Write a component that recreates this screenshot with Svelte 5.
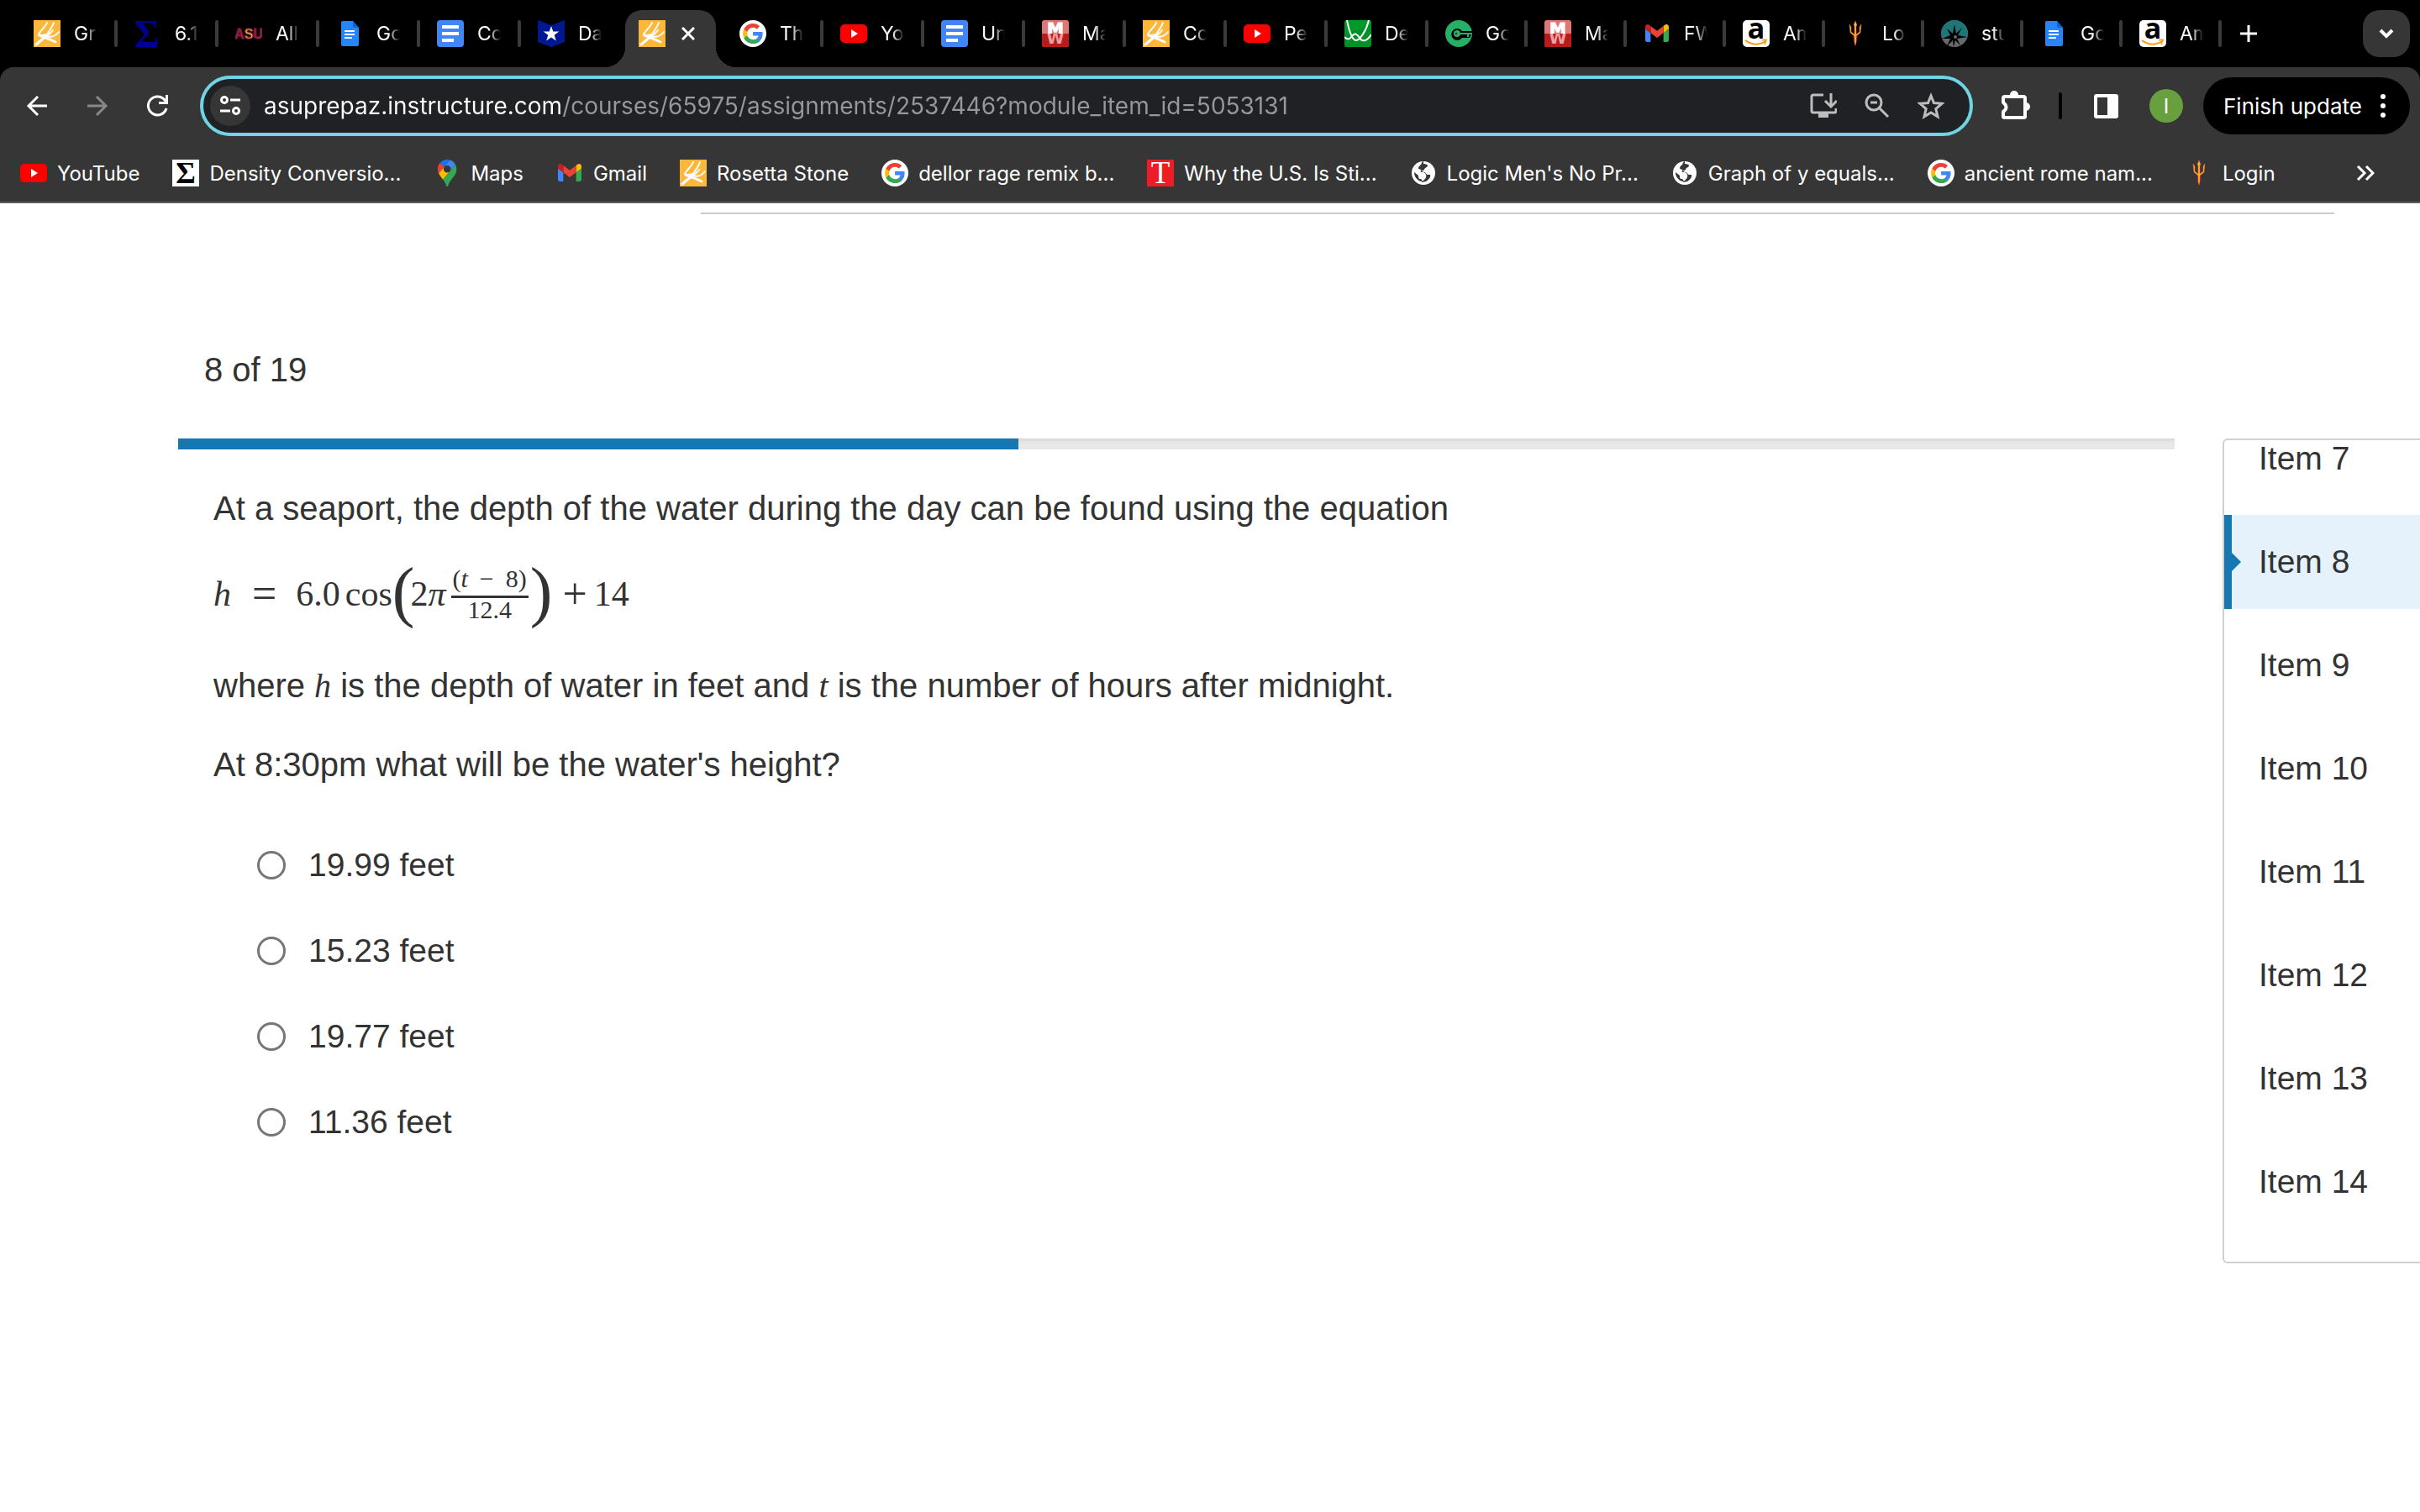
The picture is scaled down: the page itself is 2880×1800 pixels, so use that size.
<script lang="ts">
  type Link = { icon: string; label: string };

  const tabs: Link[] = [
    { icon: 'rosetta', label: 'Gr' },
    { icon: 'sigma', label: '6.1' },
    { icon: 'asu', label: 'All' },
    { icon: 'file', label: 'Go' },
    { icon: 'doc', label: 'Co' },
    { icon: 'badge', label: 'Da' },
    { icon: 'rosetta', label: '' },
    { icon: 'google', label: 'Th' },
    { icon: 'youtube', label: 'Yo' },
    { icon: 'doc', label: 'Un' },
    { icon: 'mirror', label: 'Ma' },
    { icon: 'rosetta', label: 'Co' },
    { icon: 'youtube', label: 'Pe' },
    { icon: 'desmos', label: 'De' },
    { icon: 'key', label: 'Go' },
    { icon: 'mirror', label: 'Ma' },
    { icon: 'gmail', label: 'FW' },
    { icon: 'amazon', label: 'Am' },
    { icon: 'trident', label: 'Lo' },
    { icon: 'compass', label: 'stu' },
    { icon: 'file', label: 'Go' },
    { icon: 'amazon', label: 'Am' }
  ];
  const activeTab = 6;
  const fullTabs = 14;

  const bookmarks: Link[] = [
    { icon: 'youtube', label: 'YouTube' },
    { icon: 'sigmaBox', label: 'Density Conversio...' },
    { icon: 'maps', label: 'Maps' },
    { icon: 'gmail', label: 'Gmail' },
    { icon: 'rosetta', label: 'Rosetta Stone' },
    { icon: 'google', label: 'dellor rage remix b...' },
    { icon: 'times', label: 'Why the U.S. Is Sti...' },
    { icon: 'globe', label: "Logic Men's No Pr..." },
    { icon: 'globe', label: 'Graph of y equals...' },
    { icon: 'google', label: 'ancient rome nam...' },
    { icon: 'trident', label: 'Login' }
  ];

  const options = ['19.99 feet', '15.23 feet', '19.77 feet', '11.36 feet'];
  const items = [7, 8, 9, 10, 11, 12, 13, 14];
  const total = 19;

  let url = $state('asuprepaz.instructure.com/courses/65975/assignments/2537446?module_item_id=5053131');
  let current = $state(8);
  let answer = $state('');

  const progress = $derived((current / total) * 100);
</script>

{#snippet icon(name: string)}
  <svg class="icon" viewBox="0 0 32 32" aria-hidden="true">
    {#if name === 'rosetta'}
      <rect width="32" height="32" fill="#fdb73b" />
      <g fill="none" stroke="#fff" stroke-linecap="round">
        <path d="M16 3C14 8 7 14 6 17c0 2 6 1 9 0" stroke-width="2" />
        <path d="M24 3c-2 6-6 10-8 14" stroke-width="2" />
        <path d="M30 14c-4 5-8 7-14 5" stroke-width="2" />
        <path d="M23 12c-3 4-7 7-11 8" stroke-width="2" />
        <path d="M3 29 16 18M7 18l10 4 9 4" stroke-width="3" />
      </g>
    {:else if name === 'sigma'}
      <text x="15" y="32" font-size="46" font-weight="700" text-anchor="middle" fill="#00008f" font-family="Liberation Serif, serif">Σ</text>
    {:else if name === 'sigmaBox'}
      <rect width="32" height="32" fill="#fff" />
      <text x="16" y="28" font-size="36" font-weight="700" text-anchor="middle" fill="#000" font-family="Liberation Serif, serif">Σ</text>
    {:else if name === 'asu'}
      <text x="16" y="22" font-size="16" font-weight="700" text-anchor="middle" fill="#8c1d40" stroke="#8c1d40" font-family="Liberation Sans, sans-serif">A<tspan fill="#ffc627">S</tspan>U</text>
    {:else if name === 'file'}
      <path d="M8 1h12l7 8v20a2 2 0 0 1-2 2H8a2 2 0 0 1-2-2V3a2 2 0 0 1 2-2z" fill="#2684fc" />
      <path d="M20 1l7 8h-5a2 2 0 0 1-2-2z" fill="#0066da" />
      <path d="M10 13h12M10 17h12M10 21h9" stroke="#fff" stroke-width="2" />
    {:else if name === 'doc'}
      <rect width="32" height="32" rx="4" fill="#4285f4" />
      <path d="M6 8h20M6 16h20M6 24h14" stroke="#fff" stroke-width="4" />
    {:else if name === 'badge'}
      <path d="M0 0l16 6L32 0v26l-16 6-16-6z" fill="#00188f" />
      <path d="M16 7l2.300 6.600h7l-5.600 4.200 2.100 6.800-5.800-4.100-5.800 4.100 2.100-6.800-5.600-4.200h7z" fill="#fff" />
    {:else if name === 'google'}
      <circle cx="16" cy="16" r="16" fill="#fff" />
      <g transform="translate(3 3) scale(1.090)">
        <path fill="#4285f4" d="M22.560 12.250c0-.780-.070-1.530-.200-2.250H12v4.260h5.920c-.260 1.370-1.040 2.530-2.210 3.310v2.770h3.570c2.080-1.920 3.280-4.740 3.280-8.090z" />
        <path fill="#34a853" d="M12 23c2.970 0 5.460-.98 7.280-2.660l-3.570-2.770c-.98.66-2.230 1.060-3.710 1.060-2.860 0-5.290-1.930-6.160-4.530H2.180v2.840C3.990 20.530 7.700 23 12 23z" />
        <path fill="#fbbc05" d="M5.840 14.090c-.22-.66-.35-1.360-.35-2.090s.13-1.430.35-2.090V7.070H2.180C1.430 8.550 1 10.220 1 12s.43 3.450 1.180 4.930l2.850-2.220.81-.62z" />
        <path fill="#ea4335" d="M12 5.380c1.620 0 3.060.56 4.210 1.640l3.150-3.150C17.450 2.090 14.970 1 12 1 7.700 1 3.990 3.470 2.180 7.070l3.660 2.840c.87-2.600 3.300-4.530 6.160-4.530z" />
      </g>
    {:else if name === 'youtube'}
      <rect y="5" width="32" height="22" rx="5" fill="#f00" />
      <path d="M13 11l8 5-8 5z" fill="#fff" />
    {:else if name === 'mirror'}
      <rect width="32" height="32" rx="3" fill="#dd7878" />
      <text x="16" y="17" font-size="20" font-weight="700" text-anchor="middle" fill="#fff" stroke="#fff" font-family="DejaVu Sans, sans-serif">M</text>
      <svg y="16" width="32" height="16">
        <rect y="-16" width="32" height="32" rx="3" fill="#b71c1c" />
        <text x="16" y="12" font-size="19" font-weight="700" text-anchor="middle" fill="#eba0a0" font-family="DejaVu Sans, sans-serif">W</text>
      </svg>
    {:else if name === 'desmos'}
      <rect width="32" height="32" rx="3" fill="#009a2b" />
      <path d="M0 32V18L32 4v25a3 3 0 0 1-3 3z" fill="#008526" opacity="0.500" />
      <path d="M3 0c3 15 7 24 11 24S26 13 29 0M0 20c4 4 6 3 9-1s6-3 9 2 8 5 14-4" fill="none" stroke="#fff" stroke-width="2" />
    {:else if name === 'key'}
      <circle cx="16" cy="16" r="16" fill="#27ae67" />
      <path d="M32 13H20a7 7 0 1 0 0 8h9l2-4h1z" fill="#000" />
      <circle cx="14" cy="16" r="4" fill="#27ae67" />
      <circle cx="13" cy="16" r="1" fill="#000" />
      <path d="M18 16h14M27 17v3" stroke="#27ae67" stroke-width="2" />
    {:else if name === 'gmail'}
      <g transform="translate(2 5) scale(0.318) translate(-52 -42)">
        <path fill="#4285f4" d="M58 108h14V74L52 59v43c0 3.320 2.690 6 6 6" />
        <path fill="#34a853" d="M120 108h14c3.320 0 6-2.690 6-6V59l-20 15" />
        <path fill="#fbbc04" d="M120 48v26l20-15v-8c0-7.420-8.470-11.650-14.400-7.200" />
        <path fill="#ea4335" d="M72 74V48l24 18 24-18v26L96 92" />
        <path fill="#c5221f" d="M52 51v8l20 15V48l-5.600-4.200c-5.940-4.450-14.400-.22-14.400 7.200" />
      </g>
    {:else if name === 'amazon'}
      <rect width="32" height="32" rx="5" fill="#fff" />
      <text x="16" y="22" font-size="34" font-weight="700" text-anchor="middle" fill="#000" font-family="Open Sans, sans-serif">a</text>
      <path d="M3 24c8 6 17 6 24 1" fill="none" stroke="#f90" stroke-width="2" />
      <path d="M23 24c3-1 6-1 5 0s-1 3-2 5" fill="none" stroke="#f90" stroke-width="1.500" />
    {:else if name === 'trident'}
      <path d="M16 31l-3-12h6z" fill="#8c1d40" />
      <path d="M16 1l2 5-1 1v10l4-3V8l2-3-1 10-5 4v7l-1 4-1-4v-7l-5-4L9 5l2 3v6l4 3V7l-1-1z" fill="#ffb32c" stroke="#e8682c" stroke-width="0.500" />
    {:else if name === 'compass'}
      <circle cx="16" cy="16" r="16" fill="#68696d" />
      <path d="M0 16a16 16 0 0 1 32 0l-3 6-13-4-14 4z" fill="#1f7678" />
      <path d="M16 5l2 11 7-7-5 9 11 2-12 2 4 8-6-6-2 8-1-8-7 7 4-9-10 0 10-4-4-8 7 6z" fill="#000" />
      <circle cx="17" cy="20" r="2" fill="#68696d" />
    {:else if name === 'maps'}
      <g transform="translate(5 0) scale(0.242)">
        <path fill="#1a73e8" d="M60.200 2.200C55.800.8 51 0 46.100 0 32 0 19.300 6.400 10.800 16.500l21.800 18.300L60.200 2.200z" />
        <path fill="#ea4335" d="M10.800 16.500C4.100 24.500 0 34.900 0 46.100c0 8.700 1.700 15.700 4.600 22l28-33.300-21.800-18.300z" />
        <path fill="#4285f4" d="M46.200 28.500c9.800 0 17.700 7.900 17.700 17.700 0 4.300-1.600 8.300-4.200 11.400 0 0 13.900-16.600 27.500-32.700-5.600-10.800-15.300-19-27-22.700L32.600 34.800c3.300-3.800 8.100-6.300 13.600-6.300" />
        <path fill="#fbbc04" d="M46.200 63.800c-9.800 0-17.700-7.900-17.700-17.700 0-4.300 1.500-8.300 4.100-11.300l-28 33.300c4.800 10.600 12.800 19.200 21 29.900l34.100-40.500c-3.300 3.900-8.100 6.300-13.500 6.300" />
        <path fill="#34a853" d="M59.100 109.200c15.400-24.100 33.300-35 33.300-63 0-7.700-1.900-14.900-5.200-21.300L25.600 98c2.600 3.400 5.300 7.300 7.900 11.300 9.400 14.500 6.800 23.100 12.800 23.100s3.400-8.700 12.800-23.200" />
      </g>
    {:else if name === 'times'}
      <rect width="32" height="32" fill="#ee1c25" />
      <text x="16" y="28" font-size="37" text-anchor="middle" fill="#fff" font-family="Liberation Serif, serif">T</text>
    {:else if name === 'globe'}
      <circle cx="16" cy="16" r="14" fill="#fff" />
      <path d="M16 5c3 0 5 1 5 2 0 2-2 2-3 3s-1 3-3 3h-2c-1 1 0 2 1 2h3c2 0 2 3 4 3h3c1 3-2 6-5 8l-5 1c1-2 0-4-2-4s-2-2-2-4l-5-4c0 5 3 9 8 11l3-1c2-2 4-4 3-7s-4-3-5-5-4-1-4-3 2-3 3-4 1-4 3-4z" fill="#363636" />
    {/if}
  </svg>
{/snippet}

<header class="browser">
  <div class="tab-strip">
    {#each tabs as tab, i}
      {#if i === activeTab}
        <div class="tab active">
          {@render icon(tab.icon)}
          <button class="close" type="button" aria-label="Close tab">
            <svg viewBox="0 0 16 16"><path d="M1 1l14 14M15 1L1 15" fill="none" stroke="#fff" stroke-width="3" /></svg>
          </button>
        </div>
      {:else}
        <button class="tab" class:narrow={i >= fullTabs} class:no-rule={i === activeTab - 1} type="button">
          {@render icon(tab.icon)}
          <span class="tab-label">{tab.label}</span>
        </button>
      {/if}
    {/each}
    <button class="new-tab" type="button" aria-label="New tab">
      <svg viewBox="0 0 20 20"><path d="M10 0v20M0 10h20" stroke="#fff" stroke-width="3" /></svg>
    </button>
    <button class="tab-search" type="button" aria-label="Search tabs">
      <svg viewBox="0 0 18 12"><path d="M2 2l7 7 7-7" fill="none" stroke="#fff" stroke-width="4" /></svg>
    </button>
  </div>

  <div class="chrome">
    <div class="toolbar">
      <div class="nav-buttons">
        <button type="button" aria-label="Back">
          <svg viewBox="0 0 32 32"><path d="M28 16H6M17 5L6 16l11 11" fill="none" stroke="#fff" stroke-width="3" /></svg>
        </button>
        <button type="button" aria-label="Forward">
          <svg viewBox="0 0 32 32"><path d="M4 16h22M15 5l11 11-11 11" fill="none" stroke="#888" stroke-width="3" /></svg>
        </button>
        <button type="button" aria-label="Reload">
          <svg viewBox="0 0 32 32"><path d="M26 19a11 11 0 1 1-2-10l3 3" fill="none" stroke="#fff" stroke-width="3" /><path d="M28 3v11H17v-3h8V3z" fill="#fff" /></svg>
        </button>
      </div>

      <div class="omnibox">
        <button class="site-info" type="button" aria-label="View site information">
          <svg viewBox="0 0 24 24"><g fill="none" stroke="#fff" stroke-width="3"><circle cx="5" cy="5" r="3.500" /><circle cx="19" cy="18" r="3.500" /><path d="M12 5h12M0 18h12" /></g></svg>
        </button>
        <input aria-label="Address" type="text" spellcheck="false" bind:value={url} />
        <button type="button" aria-label="Install app">
          <svg viewBox="0 0 32 32"><path d="M16 3H4q-2 0-2 2v17q0 2 2 2h25q2 0 2-2v-3" fill="none" stroke="#bdbdbd" stroke-width="3" /><path d="M25 1v15M18 10l7 7 7-7" fill="none" stroke="#bdbdbd" stroke-width="3" /><path d="M10 25h12v5H10z" fill="#bdbdbd" /></svg>
        </button>
        <button type="button" aria-label="Zoom">
          <svg viewBox="0 0 32 32"><g fill="none" stroke="#bdbdbd" stroke-width="3"><circle cx="12" cy="12" r="9" /><path d="M8 12h8M18 18l11 11" /></g></svg>
        </button>
        <button type="button" aria-label="Bookmark this tab">
          <svg viewBox="0 0 32 32"><path d="M16 4l3.500 8.500 9.500.8-7.200 6.200 2.200 9.300-8-4.900-8 4.900 2.200-9.300L3 13.300l9.500-.8z" fill="none" stroke="#bdbdbd" stroke-width="3" /></svg>
        </button>
      </div>

      <div class="tools">
        <button type="button" aria-label="Extensions">
          <svg viewBox="0 0 40 40"><path d="M8 9h22q2 0 2 2v22q0 1-2 1H8q-2 0-2-1v-6q7-5 0-11v-5q0-2 2-2z" fill="none" stroke="#fff" stroke-width="4" stroke-linejoin="round" /><path d="M15 7a4 4 0 0 1 8 0zM33 17a4 4 0 0 1 0 8z" fill="#fff" stroke="#fff" stroke-width="2" /></svg>
        </button>
        <span class="divider"></span>
        <button type="button" aria-label="Side panel">
          <svg viewBox="0 0 40 40"><rect x="8" y="8" width="25" height="25" rx="1" fill="none" stroke="#fff" stroke-width="4" /><path d="M22 8h11v25H22z" fill="#fff" /></svg>
        </button>
        <button class="avatar" type="button">I</button>
      </div>
      <button class="update" type="button">
        Finish update
        <svg viewBox="0 0 8 30"><g fill="#fff"><circle cx="4" cy="4" r="3" /><circle cx="4" cy="15" r="3" /><circle cx="4" cy="26" r="3" /></g></svg>
      </button>
    </div>

    <nav class="bookmarks" aria-label="Bookmarks">
      {#each bookmarks as bookmark}
        <a href="#top">{@render icon(bookmark.icon)}<span>{bookmark.label}</span></a>
      {/each}
      <button type="button" aria-label="More bookmarks">
        <svg viewBox="0 0 22 18"><path d="M2 1l8 8-8 8M12 1l8 8-8 8" fill="none" stroke="#fff" stroke-width="3" /></svg>
      </button>
    </nav>
  </div>
</header>

<main id="top">
  <hr />
  <h1>{current} of {total}</h1>

  <div class="columns">
    <section class="question">
      <div class="progress" role="progressbar" aria-label="Progress" aria-valuenow={current} aria-valuemin="0" aria-valuemax={total}>
        <div class="progress-fill" style="width: {progress}%"></div>
      </div>

      <div class="prompt">
        <p>At a seaport, the depth of the water during the day can be found using the equation</p>
        <div class="equation">
          <i class="sym">h</i>
          <span class="sym op equals">=</span>
          <span class="sym">6.0</span>
          <span class="sym cos">cos</span>
          <span class="paren open">(</span>
          <span class="sym">2<i>π</i></span>
          <span class="fraction">
            <span class="numerator">(<i>t</i><span class="minus">−</span>8)</span>
            <span class="denominator">12.4</span>
          </span>
          <span class="paren">)</span>
          <span class="sym op plus">+</span>
          <span class="sym">14</span>
        </div>
        <p>where <i>h</i> is the depth of water in feet and <i>t</i> is the number of hours after midnight.</p>
        <p>At 8:30pm what will be the water's height?</p>
      </div>

      <div class="options" role="radiogroup" aria-label="Answers">
        {#each options as option}
          <label>
            <input type="radio" name="answer" value={option} bind:group={answer} />
            {option}
          </label>
        {/each}
      </div>
    </section>

    <nav class="items" aria-label="Items">
      {#each items as item}
        <button class:selected={item === current} type="button" onclick={() => (current = item)}>Item {item}</button>
      {/each}
    </nav>
  </div>
</main>

<style>
  :global(body) {
    background: #fff;
    overflow-x: hidden;
  }

  button {
    padding: 0;
    border: 0;
    background: none;
    color: inherit;
    font: inherit;
  }

  svg {
    display: block;
    flex: none;
  }

  .icon {
    width: 32px;
    height: 32px;
  }

  .browser {
    background: #000;
    color: #fff;
    font-family: Inter, 'Liberation Sans', sans-serif;
    font-size: 24px;
  }

  .tab-strip {
    display: flex;
    height: 80px;
    padding: 0 12px 0 20px;
    font-size: 23px;
  }

  .tab {
    position: relative;
    display: flex;
    flex: none;
    gap: 16px;
    align-items: center;
    box-sizing: border-box;
    width: 120px;
    padding-left: 20px;
  }

  .tab.narrow {
    width: 118px;
  }

  .tab:not(.active):not(.no-rule)::after {
    content: '';
    position: absolute;
    right: 0;
    width: 4px;
    height: 32px;
    border-radius: 2px;
    background: #3a3a3a;
  }

  .tab-label {
    width: 28px;
    overflow: hidden;
    text-align: left;
    white-space: nowrap;
    mask-image: linear-gradient(90deg, #000 50%, transparent);
  }

  .tab.active {
    gap: 19px;
    width: 108px;
    margin: 12px 8px 0 4px;
    padding: 0 0 12px 16px;
    border-radius: 20px 20px 0 0;
    background: #363636;
  }

  .tab.active::before,
  .tab.active::after {
    content: '';
    position: absolute;
    bottom: 0;
    width: 24px;
    height: 24px;
  }

  .tab.active::before {
    right: 100%;
    background: radial-gradient(circle at 0 0, transparent 24px, #363636 24px);
  }

  .tab.active::after {
    left: 100%;
    background: radial-gradient(circle at 100% 0, transparent 24px, #363636 24px);
  }

  .close svg {
    width: 16px;
    height: 16px;
  }

  .new-tab {
    margin-left: 22px;
  }

  .new-tab svg {
    width: 20px;
    height: 20px;
  }

  .tab-search {
    display: grid;
    place-items: center;
    width: 56px;
    height: 56px;
    margin: 12px 0 0 auto;
    border-radius: 20px;
    background: #363636;
  }

  .tab-search svg {
    width: 18px;
    height: 12px;
  }

  .chrome {
    border-bottom: 2px solid #5c5c5c;
    border-radius: 16px 16px 0 0;
    background: #363636;
  }

  .toolbar {
    display: flex;
    align-items: center;
    height: 92px;
    padding: 0 12px 0 20px;
  }

  .nav-buttons {
    display: flex;
    gap: 24px;
    margin-right: 26px;
  }

  .nav-buttons button {
    padding: 8px;
  }

  .nav-buttons svg,
  .omnibox svg {
    width: 32px;
    height: 32px;
  }

  .omnibox {
    display: flex;
    flex: 1;
    gap: 32px;
    align-items: center;
    box-sizing: border-box;
    height: 72px;
    padding: 0 30px 0 8px;
    border: 4px solid #70d4e2;
    border-radius: 36px;
    background: #202124;
  }

  .omnibox .site-info {
    display: grid;
    place-items: center;
    width: 48px;
    height: 48px;
    margin-right: -16px;
    border-radius: 50%;
    background: #363636;
  }

  .omnibox .site-info svg {
    width: 24px;
    height: 24px;
  }

  .omnibox input {
    flex: 1;
    min-width: 0;
    padding: 0;
    border: 0;
    outline: 0;
    background: linear-gradient(90deg, #fff 354px, #96989c 354px);
    background-clip: text;
    color: transparent;
    font: 28px Inter, 'Liberation Sans', sans-serif;
  }

  .tools {
    display: flex;
    gap: 32px;
    align-items: center;
    margin: 0 24px 0 30px;
  }

  .tools svg {
    width: 40px;
    height: 40px;
  }

  .divider {
    width: 4px;
    height: 32px;
    border-radius: 2px;
    background: #000;
  }

  .avatar {
    width: 40px;
    height: 40px;
    border-radius: 50%;
    background: #689f3f;
  }

  .update {
    display: flex;
    align-items: center;
    justify-content: space-between;
    width: 246px;
    height: 68px;
    padding: 0 28px 0 24px;
    border-radius: 34px;
    background: #000;
    font-size: 26px;
    white-space: nowrap;
  }

  .update svg {
    width: 8px;
    height: 30px;
  }

  .bookmarks {
    display: flex;
    gap: 39px;
    align-items: center;
    height: 68px;
    padding: 0 54px 0 24px;
  }

  .bookmarks a {
    display: flex;
    gap: 12px;
    align-items: center;
    color: #fff;
    text-decoration: none;
    white-space: nowrap;
  }

  .bookmarks button {
    margin-left: auto;
  }

  .bookmarks button svg {
    width: 22px;
    height: 18px;
  }

  main {
    color: #333;
    font-family: 'Liberation Sans', Arial, sans-serif;
    font-size: 39px;
    line-height: 54px;
  }

  hr {
    height: 2px;
    margin: 11px 102px 0 834px;
    border: 0;
    background: #ccc;
  }

  h1 {
    margin: 158px 0 55px 243px;
    font-size: 40px;
    font-weight: 400;
  }

  .columns {
    display: flex;
    gap: 57px;
    align-items: flex-start;
    padding-left: 212px;
  }

  .question {
    flex: 1;
  }

  .progress {
    height: 13px;
    background: linear-gradient(#d8d8d8, #e8e8e8 6px);
  }

  .progress-fill {
    height: 100%;
    background: #1777b0;
  }

  .prompt {
    display: grid;
    gap: 39px;
    padding: 43px 42px 0;
    font-size: 40px;
  }

  .prompt p {
    margin: 0;
  }

  .prompt i,
  .equation {
    font-family: 'Liberation Serif', 'Times New Roman', serif;
  }

  .equation {
    display: flex;
    align-items: center;
    height: 79px;
    font-size: 42px;
  }

  .sym {
    padding-bottom: 8px;
  }

  .op {
    font-size: 52px;
  }

  .equals {
    margin: 0 23px 0 25px;
  }

  .cos {
    margin-left: 6px;
  }

  .paren {
    padding-bottom: 14px;
    font-size: 80px;
    line-height: 64px;
  }

  .open {
    margin-right: -5px;
  }

  .fraction {
    display: grid;
    margin: 0 2px 0 6px;
    font-size: 30px;
    text-align: center;
  }

  .numerator {
    padding: 0 2px 6px;
    border-bottom: 3px solid #333;
    line-height: 28px;
  }

  .minus {
    margin: 0 14px;
  }

  .denominator {
    padding-bottom: 6px;
    line-height: 28px;
  }

  .plus {
    margin: 0 8px 0 12px;
  }

  .options {
    display: grid;
    gap: 48px;
    justify-items: start;
    padding: 66px 94px 0;
  }

  .options label {
    display: flex;
    gap: 27px;
    align-items: center;
  }

  .options input {
    appearance: none;
    box-sizing: border-box;
    width: 34px;
    height: 34px;
    margin: 0;
    border: 3px solid #767676;
    border-radius: 50%;
    background: #fff;
  }

  .options input:checked {
    border: 10px solid #1777b0;
  }

  .items {
    display: flex;
    flex-direction: column;
    gap: 11px;
    box-sizing: border-box;
    width: 235px;
    height: 982px;
    overflow: hidden;
    border: 2px solid #d0d0d0;
    border-right: 0;
    border-radius: 6px 0 0 6px;
  }

  .items button {
    position: relative;
    flex: none;
    height: 112px;
    padding-left: 41px;
    text-align: left;
  }

  .items button:first-child {
    margin-top: -34px;
  }

  .items .selected {
    background: linear-gradient(90deg, #1777b0 9px, #e5f2fc 9px);
  }

  .items .selected::before {
    content: '';
    position: absolute;
    top: 45px;
    left: 9px;
    border: 11px solid transparent;
    border-left-color: #1777b0;
    border-right: 0;
  }
</style>
